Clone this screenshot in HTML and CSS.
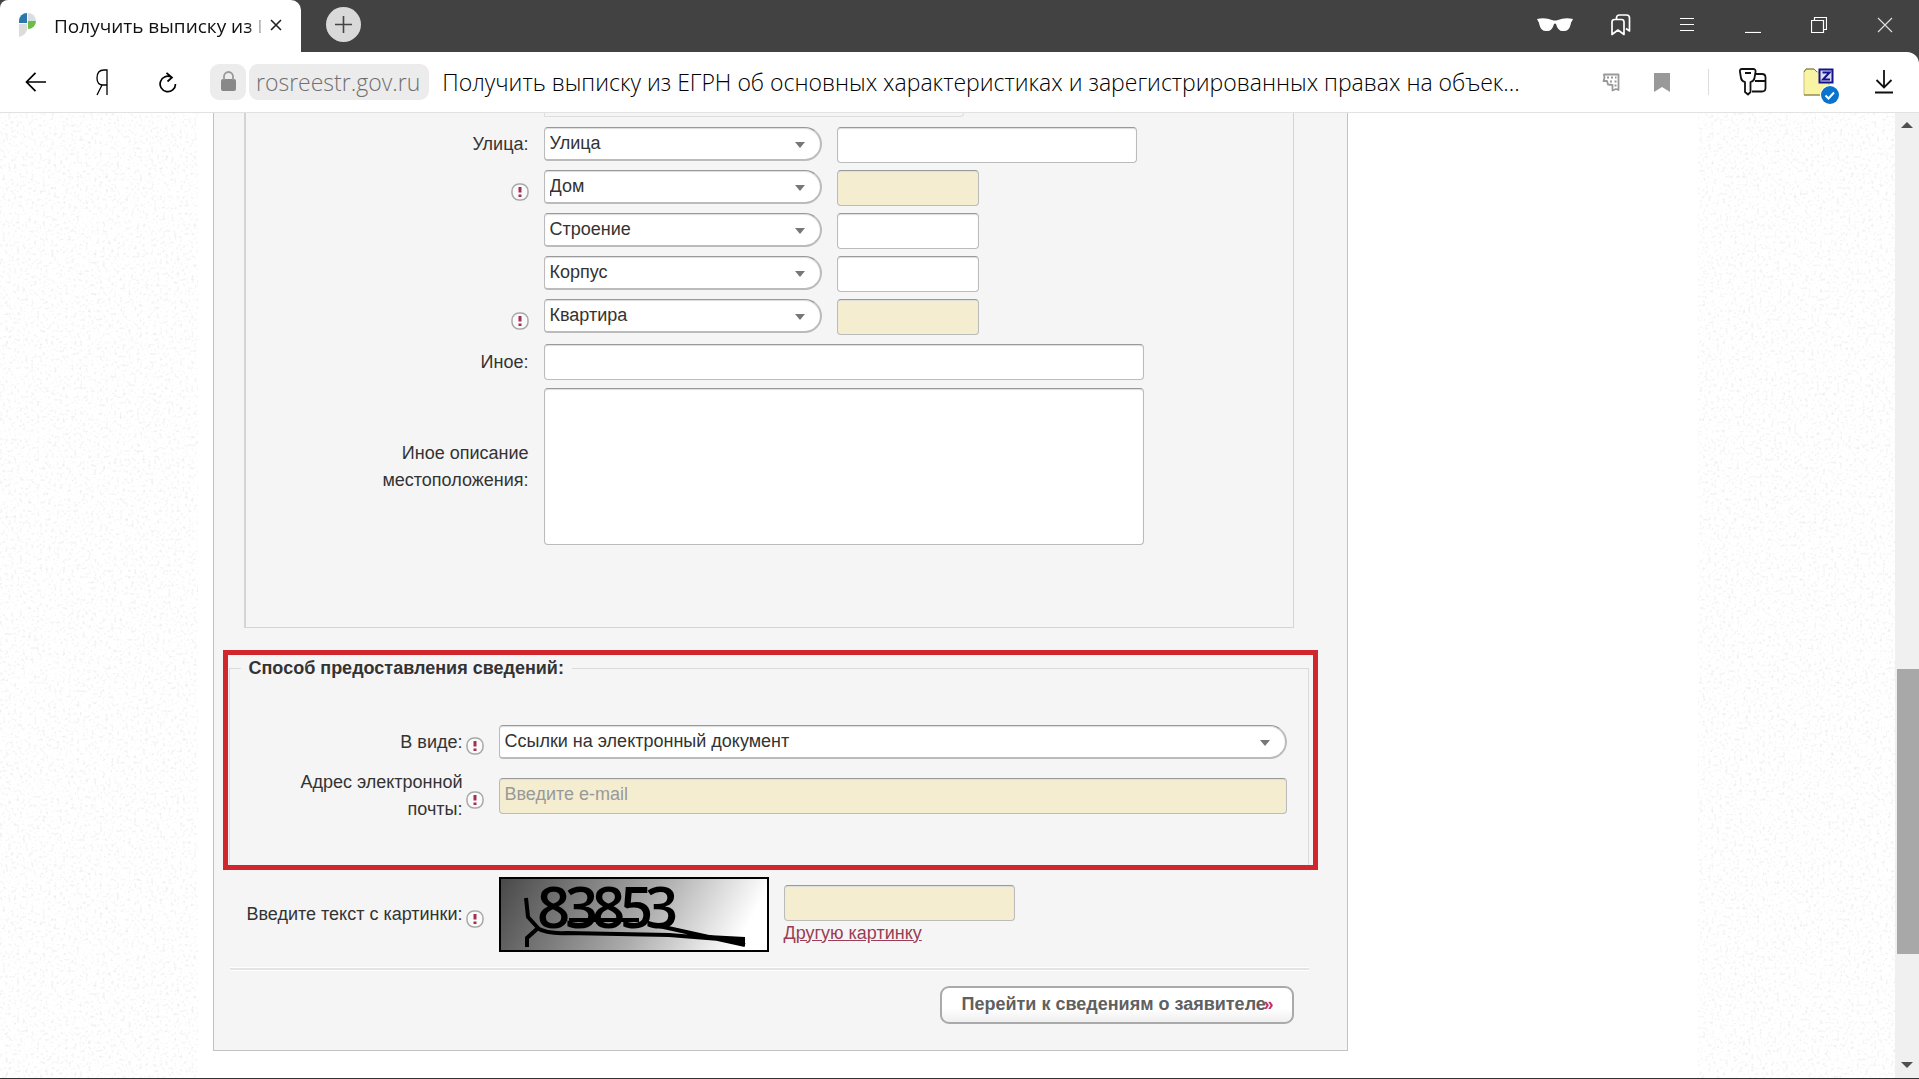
FILE: index.html
```html
<!DOCTYPE html>
<html lang="ru">
<head>
<meta charset="utf-8">
<title>Получить выписку из ЕГРН</title>
<link rel="stylesheet" href="styles.css">
</head>
<body>
<div class="browser">
  <header class="tabstrip">
    <div class="tab">
      <svg class="favicon" width="18" height="24" viewBox="0 0 18 24">
        <path d="M0 10V8A8 8 0 0 1 8 0V10Z" fill="#2b78ad"/>
        <path d="M9 0A8 8 0 0 1 17 8H9Z" fill="#d8dee2"/>
        <path d="M9 8H17A8 8 0 0 1 9 16Z" fill="#6bbd45"/>
        <path d="M0 11H8V17Q7 22 0 24Z" fill="#dcdcdc"/>
      </svg>
      <span class="tab-title">Получить выписку из ЕГРН</span>
      <button class="icon-btn" aria-label="Закрыть вкладку"><svg width="12" height="12" viewBox="0 0 12 12" fill="none" stroke="#222" stroke-width="1.6"><path d="M1 1L11 11M11 1L1 11"/></svg></button>
    </div>
    <button class="new-tab" aria-label="Новая вкладка"><svg width="17" height="17" viewBox="0 0 17 17" stroke="#444" stroke-width="1.6"><path d="M8.500 0V17M0 8.500H17"/></svg></button>
    <nav class="window-controls" aria-label="Окно">
      <button class="icon-btn glasses" aria-label="Инкогнито"><svg width="36" height="14" viewBox="0 0 36 14" fill="#fff"><path d="M0 1Q8-1 15 2Q18 3 21 2Q28-1 36 1L35 3Q34 4 33.500 7Q32 13 27 13Q21 14 19 6Q18 5 17 6Q15 14 9 13Q4 13 2.500 7Q2 4 1 3Z"/></svg></button>
      <button class="icon-btn" aria-label="Закладки"><svg width="20" height="22" viewBox="0 0 20 22" fill="none" stroke="#fff" stroke-width="1.7" stroke-linejoin="round"><path d="M1 20.500V8Q1 5.500 3.500 5.500H10.500Q13 5.500 13 8V20.500L7 16Z"/><path d="M5.500 5V4Q5.500 1 8.500 1H15.500Q18.500 1 18.500 4V17L15 14.500"/></svg></button>
      <button class="icon-btn" aria-label="Меню"><svg width="14" height="14" viewBox="0 0 14 14" stroke="#fff" stroke-width="1"><path d="M0 .5H14M0 6.500H14M0 12.500H14"/></svg></button>
      <button class="icon-btn" aria-label="Свернуть"><svg width="16" height="16" viewBox="0 0 16 16" stroke="#fff" stroke-width="1.200"><path d="M0 15.500H16"/></svg></button>
      <button class="icon-btn" aria-label="Развернуть"><svg width="16" height="16" viewBox="0 0 16 16" fill="none" stroke="#fff" stroke-width="1.200"><path d="M.5 3.500H12.500V15.500H.5ZM3.500 3.500V.5H15.500V12.500H12.500"/></svg></button>
      <button class="icon-btn" aria-label="Закрыть"><svg width="16" height="16" viewBox="0 0 16 16" stroke="#ddd" stroke-width="1.200"><path d="M1 1L15 15M15 1L1 15"/></svg></button>
    </nav>
  </header>

  <div class="toolbar-wrap">
  <div class="toolbar">
    <button class="icon-btn back" aria-label="Назад"><svg width="22" height="20" viewBox="0 0 22 20" fill="none" stroke="#000" stroke-width="1.700"><path d="M21 10H1.500M10.500 .8L1.500 10L10.500 19.200"/></svg></button>
    <button class="icon-btn ya" aria-label="Яндекс"><svg width="12" height="27" viewBox="0 0 12 27" fill="none" stroke="#000" stroke-width="1.300"><path d="M11 26V1H8Q1 1 1 9Q1 16 7 16H11M6 16L1 26"/></svg></button>
    <button class="icon-btn reload" aria-label="Обновить"><svg width="18" height="21" viewBox="0 0 18 21" fill="none" stroke="#000" stroke-width="1.700"><path d="M16.500 12A7.700 7.700 0 1 1 12.500 5.200M7.500 .8L13 5.500L8.500 9.500"/></svg></button>
    <div class="address">
      <span class="lock"><svg width="15" height="20" viewBox="0 0 15 20"><rect y="8" width="15" height="12" rx="2" fill="#888"/><path d="M3 9V5.500A4.500 4.500 0 0 1 12 5.500V9" fill="none" stroke="#999" stroke-width="1.800"/></svg></span>
      <a class="host" href="#">rosreestr.gov.ru</a>
      <span class="page-title">Получить выписку из ЕГРН об основных характеристиках и зарегистрированных правах на объек...</span>
    </div>
    <div class="actions">
      <button class="icon-btn" aria-label="Перевод"><svg width="18" height="19" viewBox="0 0 18 19" fill="none" stroke="#999"><path d="M2 1.500H16.500V17L14 16L10.500 17.500V12L6 11.500L5 8H1.500L2.500 5Z" stroke-width="1.800" stroke-linejoin="round"/><path d="M5 4.500H7M9 4.500H11M13 4.500H14.500M12.500 8.500H14.500M8 8.500H10M12.500 12.500H14.500" stroke-width="2"/></svg></button>
      <button class="icon-btn mark" aria-label="В закладки"><svg width="16" height="19" viewBox="0 0 16 19" fill="#999"><path d="M0 0H16V19L8 14L0 19Z"/></svg></button>
      <span class="divider"></span>
      <button class="icon-btn key" aria-label="Пароли"><svg width="28" height="28" viewBox="0 0 28 28" fill="none" stroke="#111" stroke-width="1.800" stroke-linejoin="round"><path d="M3 1H14Q17 1 16.500 4L15.500 10Q15 13 11.500 14V24L9 26.500L6 24V14Q2.500 13 2 10L1 4Q.5 1 3 1ZM6 5H12"/><path d="M17 6H23Q26.500 6 26.500 9.500V20Q26.500 23.500 23 23.500H13M16 13H26.500"/></svg></button>
      <button class="icon-btn folder" aria-label="Расширение"><svg width="38" height="37" viewBox="0 0 38 37"><path d="M1 4L3 1H11L14 4H26V27H1Z" fill="#f9f3a4" stroke="#c9c27a"/><path d="M1 4L3 1H11L14 4M1 27H20" fill="none" stroke="#77723e"/><rect x="16.500" y="1.500" width="13" height="13" fill="#dcdcf6" stroke="#14148c" stroke-width="2"/><path d="M19.500 4.500H26.500L20 11.500H27" fill="none" stroke="#14148c" stroke-width="2"/><circle cx="27" cy="27" r="10" fill="#fff"/><circle cx="27" cy="27" r="9" fill="#0a74cc"/><path d="M22.500 27.500L25.500 30.500L31 24.500" fill="none" stroke="#fff" stroke-width="2"/></svg></button>
      <button class="icon-btn" aria-label="Загрузки"><svg width="18" height="24" viewBox="0 0 18 24" fill="none" stroke="#111" stroke-width="1.800"><path d="M9 0V17M1.500 10L9 17.500L16.500 10M0 22.500H18"/></svg></button>
    </div>
  </div>
  </div>

  <div class="viewport">
    <div class="page">
      <svg class="texture" aria-hidden="true">
        <filter id="speckle" x="0" y="0" width="100%" height="100%">
          <feTurbulence type="fractalNoise" baseFrequency=".35" numOctaves="2" seed="4"/>
          <feColorMatrix values="0 0 0 0 .8  0 0 0 0 .8  0 0 0 0 .8  2.200 0 0 0 -1.150"/>
        </filter>
        <rect width="100%" height="100%" filter="url(#speckle)"/>
      </svg>
      <div class="site">
        <form class="panel">
          <div class="address-box">
            <div class="cut-field"></div>
            <div class="parts">
              <label class="name" for="street">Улица:</label>
              <span class="pick"><select id="street-kind" aria-label="Тип улицы"><option>Улица</option></select></span>
              <input class="box" id="street" type="text">

              <span class="name"><svg class="req"><use href="#bang"/></svg></span>
              <span class="pick"><select aria-label="Тип дома"><option>Дом</option></select></span>
              <input class="box short need" type="text" aria-label="Дом">

              <span class="name"></span>
              <span class="pick"><select aria-label="Тип строения"><option>Строение</option></select></span>
              <input class="box short" type="text" aria-label="Строение">

              <span class="name"></span>
              <span class="pick"><select aria-label="Тип корпуса"><option>Корпус</option></select></span>
              <input class="box short" type="text" aria-label="Корпус">

              <span class="name"><svg class="req"><use href="#bang"/></svg></span>
              <span class="pick"><select aria-label="Тип помещения"><option>Квартира</option></select></span>
              <input class="box short need" type="text" aria-label="Квартира">
            </div>
            <div class="other">
              <label class="name" for="other">Иное:</label>
              <input class="box" id="other" type="text">
              <label class="name" for="descr">Иное описание<br>местоположения:</label>
              <textarea class="box" id="descr"></textarea>
            </div>
          </div>

          <div class="highlight">
            <fieldset>
              <legend>Способ предоставления сведений:</legend>
              <div class="field">
                <label class="name" for="form-kind">В виде:</label>
                <svg class="req"><use href="#bang"/></svg>
                <span class="pick"><select id="form-kind"><option>Ссылки на электронный документ</option></select></span>
              </div>
              <div class="field">
                <label class="name" for="email">Адрес электронной<br>почты:</label>
                <svg class="req"><use href="#bang"/></svg>
                <input class="box need" id="email" type="email" placeholder="Введите e-mail">
              </div>
            </fieldset>
          </div>

          <div class="field captcha-row">
            <label class="name" for="code">Введите текст с картинки:</label>
            <svg class="req"><use href="#bang"/></svg>
            <div class="captcha">
              <svg class="captcha-img" width="270" height="75" viewBox="0 0 270 75" role="img" aria-label="Код">
                <defs><linearGradient id="shade" x2="1" y2=".15"><stop offset="0" stop-color="#484848"/><stop offset=".6" stop-color="#acacac"/><stop offset="1" stop-color="#fff"/></linearGradient></defs>
                <rect x="1" y="1" width="268" height="73" fill="url(#shade)" stroke="#000" stroke-width="2"/>
                <text class="captcha-text" x="38 66 93 121 146" y="51">83853</text>
                <path d="M27 21L29 40L39 51L28 61V70M38 51Q48 57 68 56L170 58L246 64M160 49L246 68" fill="none" stroke="#000" stroke-width="4"/>
                <path d="M70 43H140" stroke="#000" stroke-width="4"/>
                <path d="M190 57L246 60V69Z"/>
              </svg>
              <div class="code">
                <input class="box need" id="code" type="text">
                <a href="#">Другую картинку</a>
              </div>
            </div>
          </div>
          <hr>
          <div class="submit-row">
            <button class="submit" type="button">Перейти к сведениям о заявителе<span class="more">»</span></button>
          </div>
        </form>
      </div>
    </div>
    <div class="scrollbar">
      <svg width="12" height="6" viewBox="0 0 12 6" fill="#505050"><path d="M0 6L6 0L12 6Z"/></svg>
      <div class="track"><div class="thumb"></div></div>
      <svg width="12" height="6" viewBox="0 0 12 6" fill="#505050"><path d="M0 0L6 6L12 0Z"/></svg>
    </div>
  </div>
</div>
<svg class="symbols" aria-hidden="true">
  <symbol id="bang" viewBox="0 0 18 18"><rect x="1" y="1" width="16" height="16" rx="7" fill="#fafafa" stroke="#a8a8a8" stroke-width="1.500"/><path d="M9 4V9.500M9 11.500V14" stroke="#a3304f" stroke-width="3"/></symbol>
</svg>
</body>
</html>
```
FILE: styles.css
```css
* { box-sizing: border-box; }
body {
  margin: 0;
  background: #fff;
  color: #333;
  font: 18px/27px "Liberation Sans", Arial, sans-serif;
}
button, input, select, textarea { font: inherit; color: inherit; }
svg { display: block; flex: none; }
.symbols { position: absolute; width: 0; height: 0; }
.browser {
  display: flex;
  flex-direction: column;
  min-height: 100vh;
  border-bottom: 1px solid #333;
}
.icon-btn {
  display: flex;
  align-items: center;
  justify-content: center;
  flex: none;
  padding: 0;
  border: 0;
  background: none;
}

/* Tab strip */
.tabstrip {
  display: flex;
  align-items: center;
  height: 52px;
  background: #424242;
}
.tab {
  display: flex;
  align-items: center;
  align-self: stretch;
  width: 301px;
  padding: 0 19px 2px 19px;
  background: #fff;
  border-radius: 8px 10px 0 0;
}
.tab-title {
  flex: 1;
  margin: 2px 9px 0 17px;
  overflow: hidden;
  white-space: nowrap;
  color: #111;
  font: 19px/28px "Open Sans", "Noto Sans", sans-serif;
  -webkit-mask-image: linear-gradient(90deg, #000 194px, #0008 200px, #0004 208px);
  mask-image: linear-gradient(90deg, #000 194px, #0008 200px, #0004 208px);
}
.new-tab {
  display: flex;
  align-items: center;
  justify-content: center;
  width: 35px;
  height: 35px;
  margin: 0 0 3px 25px;
  padding: 0;
  border: 0;
  border-radius: 50%;
  background: #d9d9d9;
}
.window-controls {
  display: flex;
  align-items: center;
  margin-left: auto;
  padding: 0 1px 2px 0;
}
.window-controls .icon-btn { width: 66px; }

/* Toolbar */
.toolbar-wrap { background: #424242; }
.toolbar {
  display: flex;
  align-items: center;
  height: 61px;
  padding: 0 26px 0 25px;
  background: #fff;
  border-bottom: 1px solid #e2e2e2;
  border-top-right-radius: 12px;
}
.ya { margin-left: 49px; }
.reload { margin-left: 51px; }
.address {
  display: flex;
  align-items: center;
  flex: 1;
  min-width: 0;
  margin-left: 33px;
  font: 300 23px/36px "Open Sans", "Noto Sans", sans-serif;
}
.lock {
  display: flex;
  align-items: center;
  justify-content: center;
  width: 36px;
  height: 36px;
  padding-bottom: 2px;
  border-radius: 9px;
  background: #ececec;
}
.host {
  margin-left: 3px;
  padding: 0 9px 0 7px;
  border-radius: 9px;
  background: #ececec;
  color: #707070;
  text-decoration: none;
}
.page-title {
  margin-left: 13px;
  overflow: hidden;
  white-space: nowrap;
  color: #000;
}
.actions { display: flex; align-items: center; }
.mark { margin-left: 34px; }
.divider { width: 1px; height: 26px; margin-left: 38px; background: #ddd; }
.key { margin-left: 30px; }
.folder { margin: 8px 34px 0 36px; }

/* Page area */
.viewport { display: flex; flex: 1; }
.page { position: relative; flex: 1; min-width: 0; }
.texture { position: absolute; width: 100%; height: 100%; }
.site {
  position: relative;
  display: grid;
  grid-template-columns: minmax(0, 1135px) 1fr;
  max-width: 1500px;
  height: 100%;
  margin: 0 auto;
  padding: 0 15px;
  background: #fff;
  align-items: start;
}
.panel {
  padding: 0 29px 26px 9px;
  background: #f5f5f5;
  border: 1px solid #c2c2c2;
  border-top: 0;
}

.box, select {
  border: 1px solid #bbb;
  border-top-color: #999;
  background: #fff;
  box-shadow: inset 0 1px 1px #ddd;
}
.box {
  width: 100%;
  height: 36px;
  padding: 0 5px 4px;
  border-radius: 4px;
}
.need { background: #f4edd0; }
.short { width: 142px; }
textarea.box { height: 157px; display: block; resize: none; }
.pick { position: relative; display: block; height: 34px; }
select {
  display: block;
  width: 100%;
  height: 34px;
  padding: 0 40px 0 5px;
  border-width: 1px 2px 2px 1px;
  border-radius: 4px 17px 17px 4px;
  appearance: none;
}
.pick::after {
  content: "";
  position: absolute;
  right: 17px;
  top: 15px;
  border: 5px solid transparent;
  border-top: 6px solid #777;
  border-bottom: 0;
  pointer-events: none;
}
.name { display: block; text-align: right; }
.req { width: 18px; height: 18px; }

/* Address block */
.address-box {
  margin: 0 24px 0 21px;
  padding-bottom: 82px;
  border: 1px solid #d4d4d4;
  border-left-width: 2px;
  border-top: 0;
}
.cut-field {
  width: 420px;
  height: 4px;
  margin: 0 0 10px 298px;
  border: 1px solid #ddd;
  border-top: 0;
  border-radius: 0 0 12px 3px;
}
.parts {
  display: grid;
  grid-template-columns: 283px 278px 300px;
  column-gap: 15px;
  row-gap: 7px;
}
.parts .name { height: 34px; line-height: 34px; }
.parts .req { margin: 13px 0 0 auto; }
.other {
  display: grid;
  grid-template-columns: 283px 600px;
  gap: 8px 15px;
  align-items: center;
  margin-top: 9px;
}

/* Delivery block */
.highlight {
  margin-top: 22px;
  border: 5px solid #d2262e;
}
fieldset {
  display: grid;
  row-gap: 10px;
  margin: 0 4px 0 1px;
  padding: 43px 21px 42px 11px;
  border: 1px solid #dadcdc;
  border-bottom: 0;
}
legend { padding: 0 8px; font-weight: bold; }
.field {
  display: grid;
  grid-template-columns: 222px 18px minmax(0, 1fr);
  align-items: center;
}
.field .req { margin: 8px 0 0 3px; }
.field > :last-child { margin-left: 18px; width: auto; }
.box::placeholder { color: #999; opacity: 1; }

/* Captcha */
.captcha-row { margin: 7px 30px 0 18px; }
.captcha { display: flex; align-items: center; gap: 15px; }
.captcha-text { font: 600 58px "Open Sans", sans-serif; fill: #000; }
.code { width: 231px; }
.code .box { display: block; }
.code a { display: block; line-height: 24px; color: #9a3d55; }
hr {
  height: 4px;
  margin: 15px 9px 0 7px;
  border: solid #fff;
  border-width: 1px 0;
  background: #e4e4e4;
}
.submit-row { display: flex; justify-content: flex-end; margin: 15px 24px 0 0; }
.submit {
  position: relative;
  width: 354px;
  height: 38px;
  padding: 0 20px 2px;
  border: 2px solid #aaa;
  border-radius: 9px;
  background: linear-gradient(#fff 60%, #efefef);
  color: #606060;
  font-weight: bold;
  text-align: left;
  white-space: nowrap;
}
.more { position: absolute; right: 18px; top: 3px; color: #c03058; }

/* Scrollbar */
.scrollbar {
  display: flex;
  flex-direction: column;
  align-items: center;
  width: 24px;
  padding: 9px 0 10px;
  background: #f0f0f0;
}
.track {
  display: grid;
  flex: 1;
  align-self: stretch;
  grid-template-rows: 541fr 285fr 108fr;
  padding-left: 2px;
}
.thumb { grid-row: 2; background: #a8a8a8; }
```
